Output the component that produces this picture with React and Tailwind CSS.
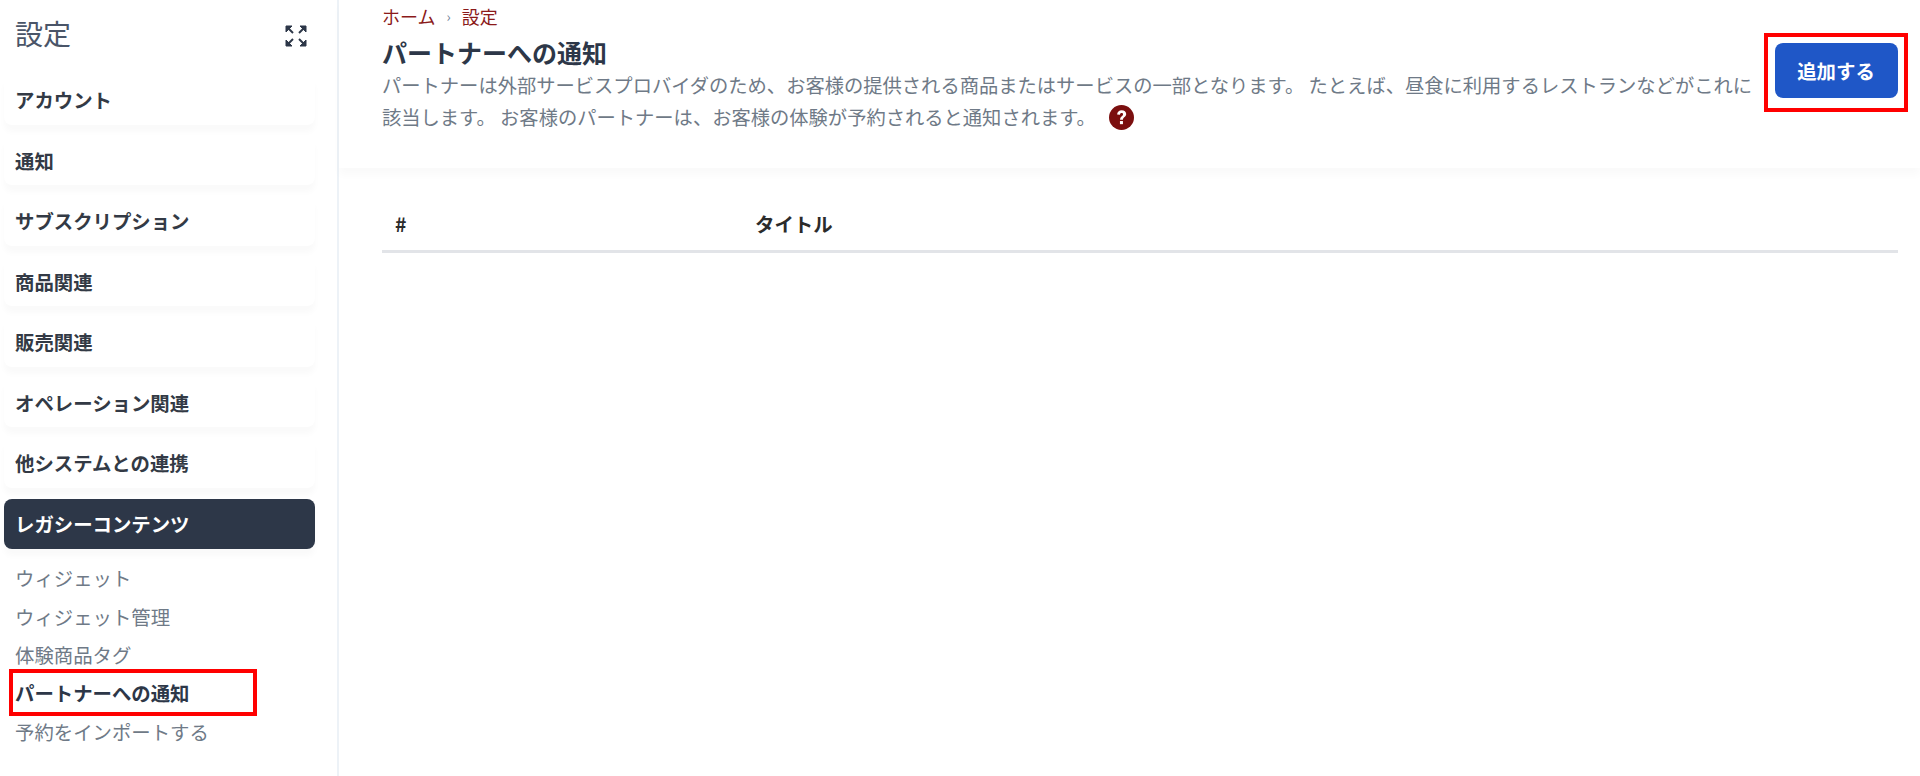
const font = { fontFamily: '"Noto Sans CJK JP", "Noto Sans", sans-serif' }

const sections = ['アカウント', '通知', 'サブスクリプション', '商品関連', '販売関連', 'オペレーション関連', '他システムとの連携']
const subItems = ['ウィジェット', 'ウィジェット管理', '体験商品タグ', 'パートナーへの通知', '予約をインポートする']

function ExpandIcon() {
  return (
    <svg className="mt-[6px]" width="22" height="22" viewBox="0 0 22 22" fill="#2d3748" stroke="#2d3748" strokeWidth="2">
      <path d="M2 2l6 6" />
      <path d="M20 2l-6 6" />
      <path d="M2 20l6-6" />
      <path d="M20 20l-6-6" />
      <path d="M1 1h6L1 7z" strokeWidth="1" />
      <path d="M21 1h-6l6 6z" strokeWidth="1" />
      <path d="M1 21h6l-6-6z" strokeWidth="1" />
      <path d="M21 21h-6l6-6z" strokeWidth="1" />
    </svg>
  )
}

function Sidebar() {
  return (
    <aside className="w-[339px] shrink-0 border-r-2 border-[#edf2f7] h-[776px] pt-[14px]">
      <div className="flex items-center justify-between pl-[15px] pr-[30px] h-[38px] mb-[23px]">
        <h1 className="text-[28px] font-normal text-[#4a5568]">設定</h1>
        <ExpandIcon />
      </div>
      <nav className="flex flex-col gap-[11px] px-1 w-[319px]">
        {sections.map(name => (
          <div key={name} className="h-[49.5px] flex items-center pl-[11px] rounded-lg bg-white shadow-[0_7px_6px_rgba(0,0,0,0.025)] text-[19.4px] font-bold text-[#333a45]">
            {name}
          </div>
        ))}
        <div className="h-[50px] flex items-center pl-[11px] rounded-lg bg-[#2d3748] shadow-[0_7px_6px_rgba(0,0,0,0.025)] text-[19.4px] font-bold text-white">
          レガシーコンテンツ
        </div>
      </nav>
      <ul className="mt-[10px] pl-[15px] flex flex-col">
        {subItems.map(name => {
          const active = name === 'パートナーへの通知'
          return (
            <li key={name} className="h-[38.4px] flex items-center">
              {active ? (
                <span className="-ml-[6px] pl-[2px] w-[248px] h-[47px] flex items-center border-4 border-[#ff0000] text-[19.4px] font-bold text-[#2d3748]">
                  {name}
                </span>
              ) : (
                <span className="text-[19.4px] text-[#6f7a87]">{name}</span>
              )}
            </li>
          )
        })}
      </ul>
    </aside>
  )
}

function Main() {
  return (
    <main className="flex-1 min-w-0">
      <header className="h-[168px] flex items-start justify-between pl-[43px] pr-[12px] shadow-[0_7px_8px_rgba(0,0,0,0.025)]">
        <div className="w-[1380px]">
          <div className="h-[32px] flex items-center gap-[11px] text-[18px] text-[#8b1a1a]">
            <span>ホーム</span>
            <span className="text-[#718096] text-[14px]">›</span>
            <span>設定</span>
          </div>
          <h2 className="text-[25px] leading-[44px] -mt-[2px] font-bold text-[#2d3748]">パートナーへの通知</h2>
          <p className="text-[19.3px] leading-[32px] -mt-[5px] text-[#6f7a87]">
            パートナーは外部サービスプロバイダのため、お客様の提供される商品またはサービスの一部となります。 たとえば、昼食に利用するレストランなどがこれに該当します。 お客様のパートナーは、お客様の体験が予約されると通知されます。
            <svg className="inline-block ml-[13px] align-[-5px]" width="25" height="25" viewBox="0 0 24 24">
              <circle cx="12" cy="12" r="12" fill="#7b0f0f" />
              <path d="M7.8 9.2c0-2.6 1.9-4.2 4.4-4.2 2.5 0 4.3 1.5 4.3 3.7 0 3-3.1 3-3.1 5.5h-2.8c0-3.6 2.9-3.5 2.9-5.2 0-.8-.6-1.3-1.4-1.3-.9 0-1.5.6-1.6 1.7z" fill="#fff" />
              <rect x="10.5" y="15.4" width="2.9" height="3" fill="#fff" />
            </svg>
          </p>
        </div>
        <div className="mt-[33px] border-4 border-[#ff0000] w-[144px] h-[79px] flex items-start justify-center pt-[6px]">
          <button className="w-[123px] h-[55px] rounded-lg bg-[#1f57c7] text-white text-[19.4px] font-bold">追加する</button>
        </div>
      </header>
      <div className="mt-[33px] mx-[43px] mr-[22px]">
        <div className="grid grid-cols-[373px_1fr] h-[52px] pb-[4px] items-center border-b-[3px] border-[#e2e4e8] text-[19.4px] font-bold text-[#2b2b2b]">
          <span className="pl-[13px]">#</span>
          <span>タイトル</span>
        </div>
      </div>
    </main>
  )
}

export default function App() {
  return (
    <div className="flex w-[1920px] h-[776px] bg-white overflow-hidden" style={font}>
      <Sidebar />
      <Main />
    </div>
  )
}
